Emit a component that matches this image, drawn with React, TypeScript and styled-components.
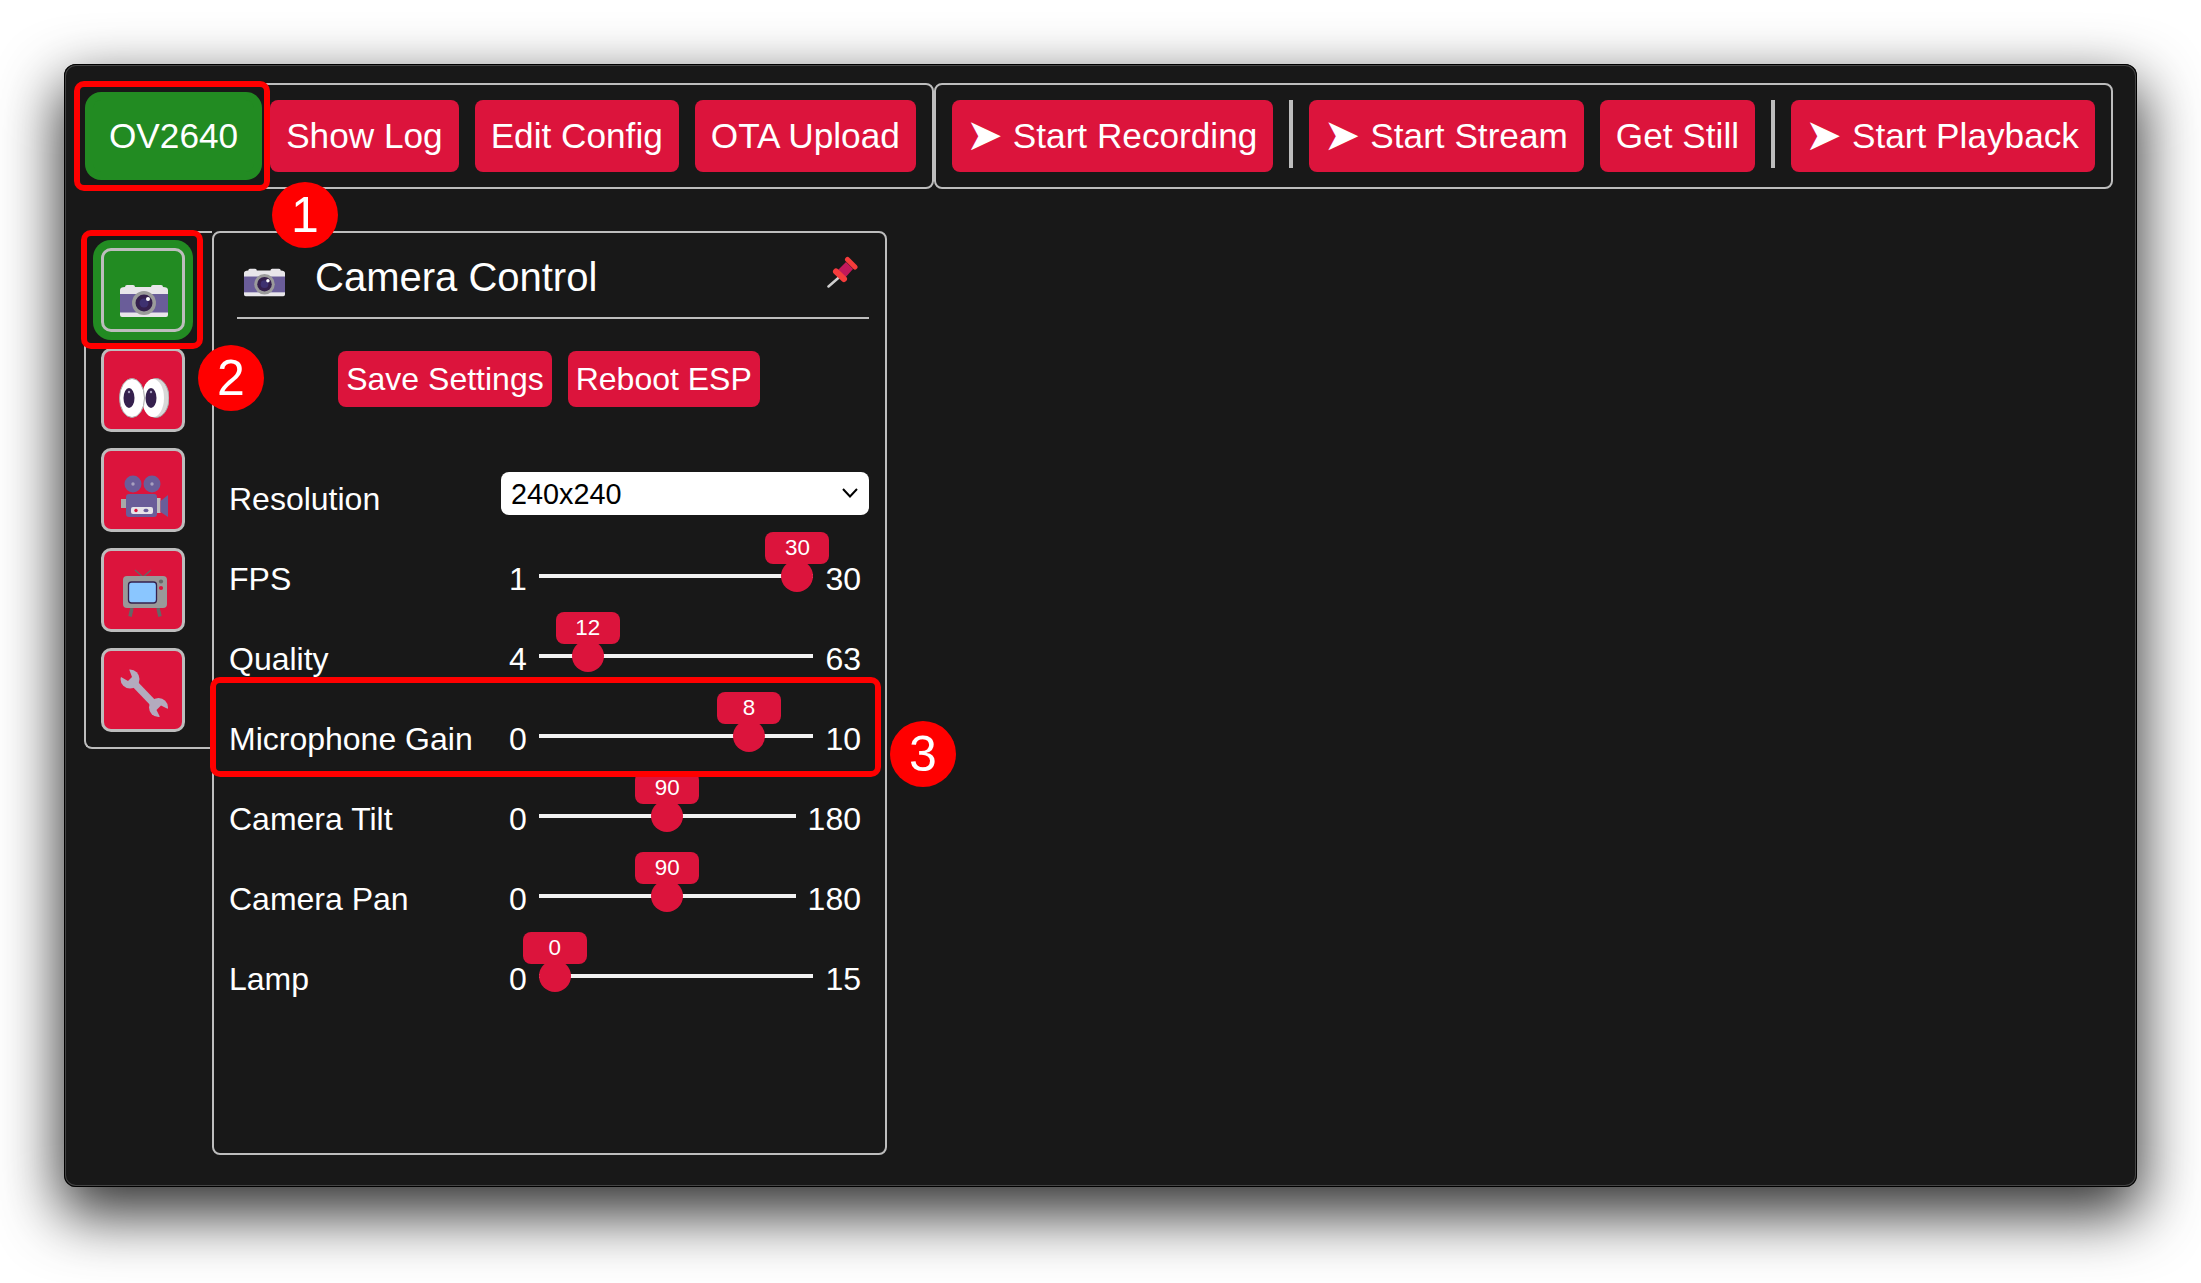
import styled, { createGlobalStyle } from "styled-components";

const GlobalStyle = createGlobalStyle`
  html, body {
    margin: 0;
    background: #fff;
  }
  body {
    font-family: "Liberation Sans", Arial, sans-serif;
    color: #fff;
  }
`;

const CRIMSON = "#dc143c";
const GREEN = "#228b22";
const LINE = "#bdbdbd";

const Window = styled.div`
  position: relative;
  box-sizing: border-box;
  width: 2073px;
  height: 1123px;
  margin: 64px 0 96px 64px;
  padding: 19px 0 0 11px;
  background: #181818;
  border-radius: 12px;
  box-shadow: 0 24px 60px 4px rgba(0, 0, 0, 0.8), inset 0 0 0 1px #000,
    inset 0 0 0 2px #444;
`;

const Toolbar = styled.div`
  display: flex;
`;

const ToolGroup = styled.div`
  display: flex;
  align-items: flex-start;
  gap: 16px;
  padding: 15px 16px;
  border: 2px solid ${LINE};
  border-radius: 8px;
`;

const Button = styled.button<{ $active?: boolean }>`
  display: flex;
  align-items: center;
  height: 72px;
  padding: 0 16px;
  border: 0;
  border-radius: 8px;
  background: ${(p) => (p.$active ? GREEN : CRIMSON)};
  box-shadow: ${(p) => (p.$active ? `0 0 0 8px ${GREEN}` : "none")};
  color: #fff;
  font: 35.2px "Liberation Sans", Arial, sans-serif;
  white-space: nowrap;
`;

const PlayGlyph = styled.span`
  display: inline-block;
  width: 45px;
  margin: 0 0 3px -6px;
  padding-right: 6px;
  font-family: "DejaVu Sans", sans-serif;
  font-size: 44px;
  line-height: 44px;
`;

const Separator = styled.div`
  width: 4px;
  height: 68px;
  background: ${LINE};
`;

const Content = styled.div`
  display: flex;
  align-items: flex-start;
  margin: 42px 0 0 9px;
`;

const Sidebar = styled.div`
  display: flex;
  flex-direction: column;
  gap: 16px;
  padding: 15px 27px 15px 15px;
  border: 2px solid ${LINE};
  border-right: 0;
  border-radius: 8px 0 0 8px;
`;

const NavButton = styled.button<{ $active?: boolean; $iconTop: number }>`
  display: flex;
  justify-content: center;
  box-sizing: border-box;
  width: 84px;
  height: 84px;
  padding: ${(p) => p.$iconTop}px 0 0 2px;
  border: 3px solid ${LINE};
  border-radius: 10px;
  background: ${(p) => (p.$active ? GREEN : CRIMSON)};
  box-shadow: ${(p) => (p.$active ? `0 0 0 8px ${GREEN}` : "none")};
`;

const Panel = styled.div`
  box-sizing: border-box;
  width: 675px;
  height: 924px;
  padding: 0 16px 0 15px;
  border: 2px solid ${LINE};
  border-radius: 8px;
`;

const PanelHeader = styled.div`
  display: flex;
  align-items: flex-start;
  height: 86px;
  margin-left: 8px;
  padding: 21px 0 0 7px;
  box-sizing: border-box;
  border-bottom: 2px solid ${LINE};
`;

const HeaderIcon = styled.div`
  display: flex;
  margin-top: 8px;
`;

const Title = styled.div`
  flex: 1;
  margin-left: 30px;
  font-size: 40px;
  line-height: 46px;
`;

const PinIcon = styled.svg`
  width: 31px;
  height: 32px;
  margin: 2px 11px 0 0;
`;

const ActionRow = styled.div`
  display: flex;
  justify-content: center;
  gap: 16px;
  margin: 32px 0 52px;
`;

const SmallButton = styled.button`
  height: 56px;
  padding: 0 8px;
  border: 0;
  border-radius: 8px;
  background: ${CRIMSON};
  color: #fff;
  font: 32px "Liberation Sans", Arial, sans-serif;
`;

const Row = styled.div`
  display: flex;
  align-items: center;
  height: 80px;
  font-size: 32px;
  line-height: 37px;
`;

const Label = styled.div`
  flex: 0 0 272px;
`;

const SelectWrap = styled.div`
  position: relative;
  flex: 1;
  height: 43px;
  margin-bottom: 11px;
`;

const Resolution = styled.select`
  display: block;
  width: 100%;
  height: 43px;
  padding: 0 10px;
  border: 0;
  border-radius: 8px;
  appearance: none;
  background-color: #fff;
  color: #000;
  font: 28.8px "Liberation Sans", Arial, sans-serif;
`;

const Chevron = styled.svg`
  position: absolute;
  top: 16px;
  right: 11px;
  width: 16px;
  height: 10px;
  pointer-events: none;
`;

const MinValue = styled.div`
  margin-left: 8px;
`;

const MaxValue = styled.div`
  margin-right: 8px;
`;

const SliderWrap = styled.div`
  position: relative;
  flex: 1;
  height: 32px;
  margin: 0 12px 6px 12px;
`;

const Range = styled.input`
  display: block;
  width: 100%;
  height: 32px;
  margin: 0;
  appearance: none;
  background: transparent;

  &::-webkit-slider-runnable-track {
    height: 4px;
    background: #f2f2f2;
  }

  &::-webkit-slider-thumb {
    appearance: none;
    width: 32px;
    height: 32px;
    margin-top: -14px;
    border-radius: 50%;
    background: ${CRIMSON};
  }
`;

const Bubble = styled.div`
  position: absolute;
  top: -28px;
  width: 64px;
  height: 32px;
  border-radius: 8px;
  background: ${CRIMSON};
  color: #fff;
  font-size: 22.4px;
  line-height: 32px;
  text-align: center;
  transform: translateX(-50%);
`;

const Highlight = styled.div<{ $x: number; $y: number; $w: number; $h: number }>`
  position: absolute;
  box-sizing: border-box;
  left: ${(p) => p.$x}px;
  top: ${(p) => p.$y}px;
  width: ${(p) => p.$w}px;
  height: ${(p) => p.$h}px;
  border: 6px solid #f00;
  border-radius: 10px;
`;

const Badge = styled.div<{ $x: number; $y: number }>`
  position: absolute;
  left: ${(p) => p.$x}px;
  top: ${(p) => p.$y}px;
  width: 66px;
  height: 66px;
  border-radius: 50%;
  background: #f00;
  color: #fff;
  font-size: 50px;
  line-height: 66px;
  text-align: center;
`;

const PURPLE = "#6a5d99";
const DARK = "#35204d";

const CameraIcon = ({ size = 48 }: { size?: number }) => (
  <svg width={size} height={size} viewBox="0 0 48 48">
    <path d="M5 10 Q5 8 7 8 H13 Q15 8 15 10 H31 Q31 8 33 8 H41 Q43 8 43 10 Q48 10 48 13 V38 Q48 40 46 40 H2 Q0 40 0 38 V13 Q0 10 5 10Z" fill="#e8e6ea" />
    <rect y="17" width="48" height="18.5" fill={PURPLE} />
    <circle cx="24" cy="26" r="12" fill="#9b9b9b" />
    <circle cx="24" cy="26" r="8.5" fill={DARK} />
    <circle cx="24" cy="26" r="4.5" fill="#3e3170" />
    <circle cx="28" cy="22" r="2" fill="#fff" />
  </svg>
);

const EyesIcon = () => (
  <svg width="50" height="48" viewBox="0 0 50 48">
    <ellipse cx="37" cy="21" rx="13" ry="19.5" fill="#d8d8d8" stroke="#a8a8a8" />
    <ellipse cx="34" cy="21" rx="11" ry="19" fill="#fff" />
    <ellipse cx="13" cy="21" rx="12.5" ry="19.5" fill="#fff" stroke="#a8a8a8" />
    <ellipse cx="10" cy="21" rx="5.5" ry="10" fill={DARK} />
    <ellipse cx="32" cy="21" rx="5.5" ry="10" fill={DARK} />
    <circle cx="10" cy="15" r="1.2" fill="#a8a0c0" />
    <circle cx="32" cy="15" r="1.2" fill="#a8a0c0" />
  </svg>
);

const VideoIcon = () => (
  <svg width="48" height="48" viewBox="0 0 48 48" overflow="visible">
    <circle cx="13" cy="7" r="8.5" fill={PURPLE} />
    <circle cx="32" cy="7" r="8.5" fill={PURPLE} />
    <circle cx="13" cy="7" r="1.7" fill="#a8a0c0" />
    <circle cx="32" cy="7" r="1.7" fill="#a8a0c0" />
    <rect x="1" y="22" width="5" height="9" fill="#a8a8a8" />
    <rect x="6" y="17" width="31" height="23" rx="3" fill={PURPLE} />
    <rect x="11" y="30" width="22" height="7" rx="2" fill="#e6e4ea" />
    <circle cx="16" cy="33.5" r="1.7" fill={CRIMSON} />
    <ellipse cx="26" cy="33.5" rx="2.6" ry="1.8" fill={PURPLE} />
    <rect x="37" y="21" width="3.5" height="15" fill="#bdbdbd" />
    <path d="M40.5 24 L48 18 V40 L40.5 35Z" fill={PURPLE} />
  </svg>
);

const TvIcon = () => (
  <svg width="48" height="48" viewBox="0 0 48 48">
    <path d="M23 8 L15 1 M23 8 L31 1" stroke="#666" strokeWidth="1.5" fill="none" />
    <path d="M12 39 L10 47.5 M38 39 L40 47.5" stroke="#666" strokeWidth="3.5" fill="none" />
    <rect x="3" y="7" width="44" height="32" rx="4" fill="#999" />
    <rect x="8.5" y="13" width="28" height="21" rx="3" fill="#8ac6ff" stroke={DARK} strokeWidth="1.3" />
    <circle cx="41" cy="12.5" r="2.1" fill="#666" />
    <circle cx="41" cy="19" r="2.1" fill={CRIMSON} />
  </svg>
);

const WrenchIcon = () => (
  <svg width="48" height="48" viewBox="0 0 48 48">
    <path d="M12 12 L36 37" stroke="#b3abbe" strokeWidth="7" />
    <circle cx="10" cy="10" r="9.5" fill="#b3abbe" />
    <circle cx="38.5" cy="38.5" r="9.5" fill="#b3abbe" />
    <path d="M1 8 L8 12 L12 8 L9 0 L0 0Z" fill={CRIMSON} />
    <path d="M48 40 L41 36.5 L36.5 41 L40 48 L50 50Z" fill={CRIMSON} />
  </svg>
);

const Pin = () => (
  <PinIcon viewBox="0 0 31 32">
    <path d="M1.5 30.5 L13 20.5" stroke="#cfcfcf" strokeWidth="2.5" strokeLinecap="round" />
    <path d="M19 6 L26 13 L17 23 L10 15Z" fill="#c2185b" />
    <path d="M20.5 3.5 L28 11" stroke="#f53c3c" strokeWidth="5" strokeLinecap="round" />
    <path d="M9 15.5 L17 23" stroke="#f53c3c" strokeWidth="6" strokeLinecap="round" />
  </PinIcon>
);

const SLIDERS = [
  { label: "FPS", min: 1, max: 30, value: 30 },
  { label: "Quality", min: 4, max: 63, value: 12 },
  { label: "Microphone Gain", min: 0, max: 10, value: 8 },
  { label: "Camera Tilt", min: 0, max: 180, value: 90 },
  { label: "Camera Pan", min: 0, max: 180, value: 90 },
  { label: "Lamp", min: 0, max: 15, value: 0 },
];

const Slider = ({ label, min, max, value }: (typeof SLIDERS)[number]) => {
  const ratio = (value - min) / (max - min);
  return (
    <Row>
      <Label>{label}</Label>
      <MinValue>{min}</MinValue>
      <SliderWrap>
        <Range type="range" min={min} max={max} defaultValue={value} />
        <Bubble style={{ left: `calc(16px + ${ratio} * (100% - 32px))` }}>{value}</Bubble>
      </SliderWrap>
      <MaxValue>{max}</MaxValue>
    </Row>
  );
};

const App = () => (
  <>
    <GlobalStyle />
    <Window>
      <Toolbar>
        <ToolGroup>
          <Button $active>OV2640</Button>
          <Button>Show Log</Button>
          <Button>Edit Config</Button>
          <Button>OTA Upload</Button>
        </ToolGroup>
        <ToolGroup>
          <Button><PlayGlyph>➤</PlayGlyph>Start Recording</Button>
          <Separator />
          <Button><PlayGlyph>➤</PlayGlyph>Start Stream</Button>
          <Button>Get Still</Button>
          <Separator />
          <Button><PlayGlyph>➤</PlayGlyph>Start Playback</Button>
        </ToolGroup>
      </Toolbar>
      <Content>
        <Sidebar>
          <NavButton $active $iconTop={26}><CameraIcon /></NavButton>
          <NavButton $iconTop={26}><EyesIcon /></NavButton>
          <NavButton $iconTop={26}><VideoIcon /></NavButton>
          <NavButton $iconTop={18}><TvIcon /></NavButton>
          <NavButton $iconTop={18}><WrenchIcon /></NavButton>
        </Sidebar>
        <Panel>
          <PanelHeader>
            <HeaderIcon><CameraIcon size={41} /></HeaderIcon>
            <Title>Camera Control</Title>
            <Pin />
          </PanelHeader>
          <ActionRow>
            <SmallButton>Save Settings</SmallButton>
            <SmallButton>Reboot ESP</SmallButton>
          </ActionRow>
          <Row>
            <Label>Resolution</Label>
            <SelectWrap>
              <Resolution defaultValue="240x240">
                <option>240x240</option>
              </Resolution>
              <Chevron viewBox="0 0 16 10">
                <path d="M1 1 L8 8.5 L15 1" fill="none" stroke="#000" strokeWidth="2" />
              </Chevron>
            </SelectWrap>
          </Row>
          {SLIDERS.map((s) => (
            <Slider key={s.label} {...s} />
          ))}
        </Panel>
      </Content>
      <Highlight $x={10} $y={17} $w={196} $h={110} />
      <Highlight $x={17} $y={166} $w={122} $h={119} />
      <Highlight $x={146} $y={613} $w={671} $h={100} />
      <Badge $x={208} $y={118}>1</Badge>
      <Badge $x={134} $y={281}>2</Badge>
      <Badge $x={826} $y={657}>3</Badge>
    </Window>
  </>
);

export default App;
